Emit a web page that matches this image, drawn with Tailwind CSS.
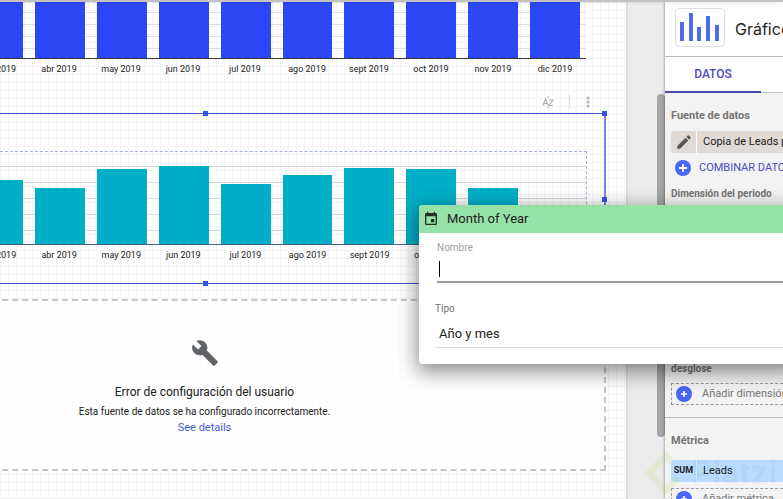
<!DOCTYPE html>
<html lang="es">
<head>
  <meta charset="UTF-8" />
  <meta name="viewport" content="width=device-width, initial-scale=1.0"/>
  <title>Informe | Leads</title>
  <script src="https://cdn.jsdelivr.net/npm/@tailwindcss/browser@4"></script>
</head>
<body class="relative flex h-screen flex-col overflow-hidden bg-[#ebebeb] font-['Roboto',sans-serif] text-[#212121]">

  <div class="z-10 h-0.5 shrink-0 bg-[#c2c2c2] shadow-sm"></div>

  <div class="flex min-h-0 flex-1">

    <!-- Lienzo del informe -->
    <main class="min-w-0 flex-1 overflow-hidden border-r-2 border-[#dcdcdc] bg-white bg-[repeating-linear-gradient(0deg,#f4f4f4_0_1px,transparent_1px_8px),repeating-linear-gradient(90deg,#f4f4f4_0_1px,transparent_1px_8px)]">

      <!-- Gráfico 1 -->
      <section class="mr-10">
        <div class="h-[57px] border-b border-[#333] bg-[linear-gradient(#dedede_0_1px,transparent_1px)] bg-[size:100%_12px] bg-[position:0_10px]">
          <div id="bars1" class="-ml-[33px] grid h-full grid-cols-10"></div>
        </div>
        <div id="labels1" class="-ml-[34px] grid grid-cols-10 pt-1 text-center text-[9px] leading-3"></div>
      </section>

      <!-- Acciones del gráfico -->
      <div class="mt-[19px] mr-8 flex h-4 items-center justify-end text-[#b3b3b3]">
        <button aria-label="Ordenar" class="mr-[15px]">
          <svg class="h-3 w-3" viewBox="0 0 12 12" fill="none" stroke="currentColor" stroke-width="1.200"><path d="M1 9.500 3.500 3 6 9.500M2 7.500h3M7 4h4L7 9.500h4"/><path d="M4.500 1.500 6 0 7.500 1.500zM4.500 10.800 6 12 7.500 10.800z" fill="currentColor" stroke="none"/></svg>
        </button>
        <span class="h-3.5 w-px bg-[#dedede]"></span>
        <button aria-label="Más opciones" class="ml-3">
          <svg class="h-3 w-3" viewBox="0 0 12 12" fill="currentColor"><circle cx="6" cy="2" r="1.500"/><circle cx="6" cy="6" r="1.500"/><circle cx="6" cy="10" r="1.500"/></svg>
        </button>
      </div>

      <!-- Gráfico 2 (seleccionado) -->
      <section class="relative mt-[3px] mr-5 h-[171px] border-y border-r-2 border-y-[#3f5bd0] border-r-[#7386e2] pt-[37px] pr-[17px]">
        <div class="h-[94px] border-t border-r border-b border-t-[#a3b1e0] border-r-[#a3b1e0] border-b-[#4f5f80] [border-style:dashed_dashed_solid_none]">
          <div class="h-full bg-[linear-gradient(#d9d9d9_0_1px,transparent_1px)] bg-[size:100%_16px] bg-[position:0_14px] bg-repeat-y">
            <div id="bars2" class="-ml-[33px] grid h-full grid-cols-10"></div>
          </div>
        </div>
        <div id="labels2" class="-ml-[34px] grid grid-cols-10 pt-1 text-center text-[9px] leading-3"></div>
        <span class="absolute -top-[3px] left-[203px] size-[5px] bg-[#3353e4]"></span>
        <span class="absolute -top-[3px] -right-[3px] size-[5px] bg-[#3353e4]"></span>
        <span class="absolute top-[83px] -right-[3px] size-[5px] bg-[#3353e4]"></span>
        <span class="absolute -bottom-[3px] left-[203px] size-[5px] bg-[#3353e4]"></span>
      </section>

      <!-- Error -->
      <section class="mt-[15px] mr-5 -ml-[197px] flex h-[172px] flex-col items-center border-2 border-dashed border-[#c6c6cc] bg-white/70 pt-[38px] text-center">
        <svg class="h-7 w-7 text-[#5f6368]" viewBox="0 0 24 24" fill="currentColor"><path d="M22.700 19l-9.100-9.100c.9-2.300.4-5-1.500-6.900-2-2-5-2.400-7.400-1.300L9 6 6 9 1.600 4.700C.4 7.100.9 10.100 2.900 12.100c1.900 1.900 4.600 2.400 6.900 1.500l9.100 9.100c.4.4 1 .4 1.400 0l2.300-2.300c.5-.4.5-1.100.1-1.400z"/></svg>
        <h2 class="mt-[17px] text-xs leading-4">Error de configuración del usuario</h2>
        <p class="mt-1 text-[10px] leading-4">Esta fuente de datos se ha configurado incorrectamente.</p>
        <a href="#" class="text-[11px] leading-4 text-[#3f5bd0]">See details</a>
      </section>
    </main>

    <!-- Barra de desplazamiento -->
    <div class="w-[37px] shrink-0 pt-[92px] pl-[29px]">
      <div class="h-[343px] w-2 rounded-sm bg-[#a5a5a5]"></div>
    </div>

    <!-- Panel de propiedades -->
    <aside class="w-[118px] shrink-0 overflow-hidden bg-[#f3f3f3] whitespace-nowrap shadow-[0_0_3px_rgba(0,0,0,0.5)]">
      <header class="flex h-[55px] items-center gap-2.5 border-b border-[#bdbdbd] bg-white pl-2.5">
        <span class="-mt-1 grid h-[39px] w-[50px] shrink-0 place-items-center rounded border border-[#dadce0]">
          <svg class="h-7 w-10" viewBox="0 0 40 28" fill="#4f6bed"><path d="M0 9h4v19H0zM9 0h4v28H9zM17 14h4v14h-4zM26 3h4v25h-4zM35 12h4v16h-4z"/></svg>
        </span>
        <h1 class="font-['Inter',sans-serif] text-base">Gráfico</h1>
      </header>
      <nav class="flex h-9 border-b border-[#bdbdbd] bg-white">
        <button class="-mb-px h-9 w-24 shrink-0 border-b-2 border-[#4648b0] text-xs font-medium text-[#4d48c4]">DATOS</button>
      </nav>

      <div class="pl-1.5">
        <h3 class="mt-[15px] text-[11px] leading-4 font-bold text-[#757575]">Fuente de datos</h3>
        <button class="mt-[7px] flex h-[22px] w-full items-center rounded-l-sm bg-[#e0dad6] text-left text-[11px]">
          <span class="grid h-full w-[26px] shrink-0 place-items-center border-r border-white">
            <svg class="h-[18px] w-[18px] text-[#555]" viewBox="0 0 24 24" fill="currentColor"><path d="M3 17.250V21h3.750L17.810 9.940l-3.750-3.750L3 17.250zM20.710 7.040a1 1 0 0 0 0-1.410l-2.340-2.340a1 1 0 0 0-1.410 0l-1.830 1.830 3.750 3.750 1.830-1.830z"/></svg>
          </span>
          <span class="pl-1.5">Copia de Leads por mes</span>
        </button>
        <button class="mt-[7px] flex items-center gap-2 pl-1 text-[11px] leading-4 text-[#4d48c4]">
          <svg class="h-4 w-4" viewBox="0 0 16 16"><circle cx="8" cy="8" r="8" fill="#4a66f5"/><path d="M8 4v8M4 8h8" stroke="#fff" stroke-width="1.800"/></svg>
          COMBINAR DATOS
        </button>
        <h3 class="mt-2.5 text-[10px] leading-4 font-bold text-[#757575]">Dimensión del periodo</h3>
      </div>

      <div class="mt-[159px] border-b border-[#bdbdbd] pb-3 pl-1.5">
        <h3 class="text-[10px] leading-4 font-bold text-[#757575]">desglose</h3>
        <button class="mt-1.5 flex h-[22px] w-full items-center gap-2.5 border border-r-0 border-dashed border-[#999] pl-1 text-[11px] text-[#757575]">
          <svg class="h-4 w-4 shrink-0" viewBox="0 0 16 16"><circle cx="8" cy="8" r="8" fill="#4a66f5"/><path d="M8 5v6M5 8h6" stroke="#fff" stroke-width="1.600"/></svg>
          Añadir dimensión
        </button>
      </div>

      <div class="pt-[15px] pl-1.5">
        <h3 class="text-[11px] leading-4 font-bold text-[#757575]">Métrica</h3>
        <button class="mt-[11px] flex h-[22px] w-full items-center rounded-l-sm bg-[#b8dbff] text-left text-[11px]">
          <span class="grid h-full w-[26px] shrink-0 place-items-center border-r border-white/60 text-[9px] font-bold">SUM</span>
          <span class="pl-1.5">Leads</span>
        </button>
        <button class="mt-1.5 flex h-[22px] w-full items-center gap-2.5 border border-r-0 border-dashed border-[#999] pl-1 text-[11px] text-[#757575]">
          <svg class="h-4 w-4 shrink-0" viewBox="0 0 16 16"><circle cx="8" cy="8" r="8" fill="#4a66f5"/><path d="M8 5v6M5 8h6" stroke="#fff" stroke-width="1.600"/></svg>
          Añadir métrica
        </button>
      </div>
    </aside>
  </div>

  <!-- Marca de agua -->
  <div class="pointer-events-none absolute right-1.5 bottom-1 flex items-center gap-1">
    <svg class="h-11 w-11" viewBox="0 0 44 44" fill="none" stroke="#b4d65a" stroke-opacity=".15" stroke-width="7"><path d="M28 11 22 5 5 22l17 17 12-12"/></svg>
    <span class="font-['Inter',sans-serif] text-[32px] leading-10 font-semibold text-black/5">Platzi</span>
  </div>

  <!-- Editor de campo -->
  <form class="absolute top-[205px] -right-4 left-[419px] rounded-sm bg-white pb-4 shadow-[0_6px_20px_2px_rgba(0,0,0,0.45)]">
    <header class="flex h-7 items-center gap-2 rounded-tl-sm bg-[#96e1a7] pl-1">
      <svg class="h-4 w-4 text-[#1f3325]" viewBox="0 0 24 24" fill="currentColor"><path d="M17 12h-5v5h5v-5zM16 1v2H8V1H6v2H5a2 2 0 0 0-2 2v14a2 2 0 0 0 2 2h14a2 2 0 0 0 2-2V5a2 2 0 0 0-2-2h-1V1h-2zm3 18H5V8h14v11z"/></svg>
      <h2 class="text-[13px]">Month of Year</h2>
    </header>
    <div class="relative pt-[9px] pl-[18px]">
      <label for="nombre" class="block text-[10px] leading-3 text-[#9e9e9e]">Nombre</label>
      <input id="nombre" type="text" class="block h-[29px] w-full border-b-2 border-[#999] px-0.5 text-[13px] caret-transparent outline-none" />
      <span class="absolute bottom-1.5 left-5 h-4 w-px bg-black"></span>
    </div>
    <div class="pt-5 pl-4">
      <label for="tipo" class="block text-[10px] leading-3 text-[#757575]">Tipo</label>
      <select id="tipo" class="block h-[33px] w-full appearance-none border-b border-[#e0e0e0] pt-1.5 pl-1 text-[13px] text-[#212121] outline-none">
        <option>Año y mes</option>
      </select>
    </div>
  </form>

  <script>
    const meses = ["mar", "abr", "may", "jun", "jul", "ago", "sept", "oct", "nov", "dic"];
    const leads = [64, 56, 75, 78, 60, 69, 76, 75, 56, 0];

    const labels = meses.map(m => `<span>${m} 2019</span>`).join("");
    document.getElementById("labels1").innerHTML = labels;
    document.getElementById("labels2").innerHTML = labels;

    document.getElementById("bars1").innerHTML = meses.map(() =>
      `<div class="mx-1.5 bg-[#2b47f6]"></div>`
    ).join("");

    document.getElementById("bars2").innerHTML = leads.map(v =>
      `<div class="mx-1.5 self-end bg-[#00aec7]" style="height: ${v}px"></div>`
    ).join("");
  </script>
</body>
</html>
